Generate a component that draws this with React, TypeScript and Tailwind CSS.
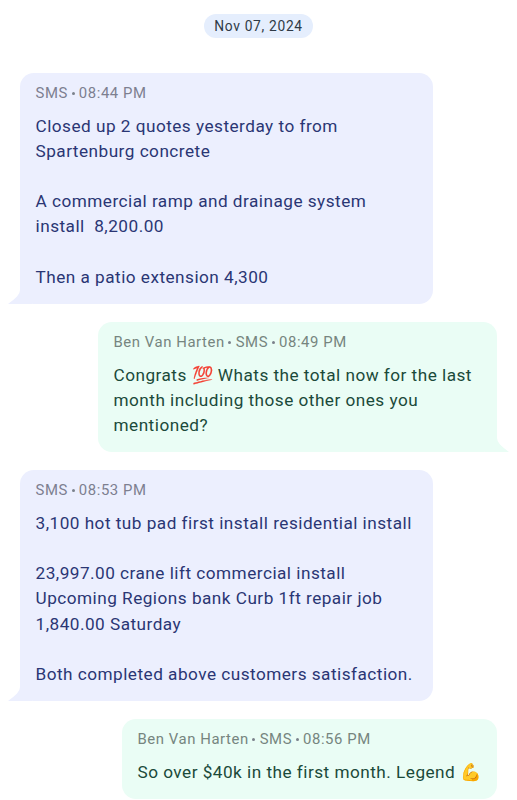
type Message = {
  id: number;
  sender?: string;
  time: string;
  outgoing: boolean;
  width: string;
  body: string;
};

const messages: Message[] = [
  {
    id: 1,
    time: "08:44 PM",
    outgoing: false,
    width: "w-[413px]",
    body: "Closed up 2 quotes yesterday to from\nSpartenburg concrete\n\nA commercial ramp and drainage system\ninstall  8,200.00\n\nThen a patio extension 4,300",
  },
  {
    id: 2,
    sender: "Ben Van Harten",
    time: "08:49 PM",
    outgoing: true,
    width: "w-[399px]",
    body: "Congrats 💯 Whats the total now for the last\nmonth including those other ones you\nmentioned?",
  },
  {
    id: 3,
    time: "08:53 PM",
    outgoing: false,
    width: "w-[413px]",
    body: "3,100 hot tub pad first install residential install\n\n23,997.00 crane lift commercial install\nUpcoming Regions bank Curb 1ft repair job\n1,840.00 Saturday\n\nBoth completed above customers satisfaction.",
  },
  {
    id: 4,
    sender: "Ben Van Harten",
    time: "08:56 PM",
    outgoing: true,
    width: "w-[375px]",
    body: "So over $40k in the first month. Legend 💪",
  },
];

const Dot = () => <span className="mr-[4.3px] ml-[3.7px] size-[3px] rounded-full bg-[#7b818b]" />;

const Bubble = ({ message }: { message: Message }) => {
  const { outgoing, sender, time, body, width } = message;

  return (
    <div
      className={`relative rounded-[14px] px-[15.5px] pt-[11px] pb-[14.2px] ${width} ${
        outgoing ? "self-end bg-[#eafdf5] text-[#1b4a3a]" : "self-start bg-[#eceffe] text-[#2a3674]"
      }`}
    >
      <div
        className={`flex h-[19px] items-center text-[14.9px] tracking-[0.56px] whitespace-pre ${
          outgoing ? "text-[#76857f]" : "text-[#7d7f90]"
        }`}
      >
        {sender && (
          <>
            {sender}
            <Dot />
          </>
        )}
        SMS
        <Dot />
        {time}
      </div>
      <p className="mt-[10.8px] text-[17.2px] leading-[25.15px] tracking-[0.48px] whitespace-pre">{body}</p>

      {/* Tail */}
      {message.id !== 4 && (
        <svg
          viewBox="0 0 24 14"
          className={`absolute bottom-0 h-[14px] w-6 ${
            outgoing ? "-right-3 -scale-x-100 fill-[#eafdf5]" : "-left-3 fill-[#eceffe]"
          }`}
        >
          <path d="M12 0 Q12 3.5 9 6.5 Q5 10.5 0 14 H24 V0 Z" />
        </svg>
      )}
    </div>
  );
};

const App = () => {
  return (
    <div className="flex h-[800px] w-full flex-col overflow-hidden bg-white pr-5 pl-5 font-['Roboto',sans-serif]">
      <div className="mt-[14px] mb-[35px] flex h-6 w-[109px] shrink-0 items-center justify-center self-center rounded-full bg-[#e5eefd] text-[13.8px] tracking-[0.68px] text-[#2f3a46]">
        Nov 07, 2024
      </div>
      <div className="flex flex-col gap-[17.8px]">
        {messages.map((message) => (
          <Bubble key={message.id} message={message} />
        ))}
      </div>
    </div>
  );
};

export default App;
